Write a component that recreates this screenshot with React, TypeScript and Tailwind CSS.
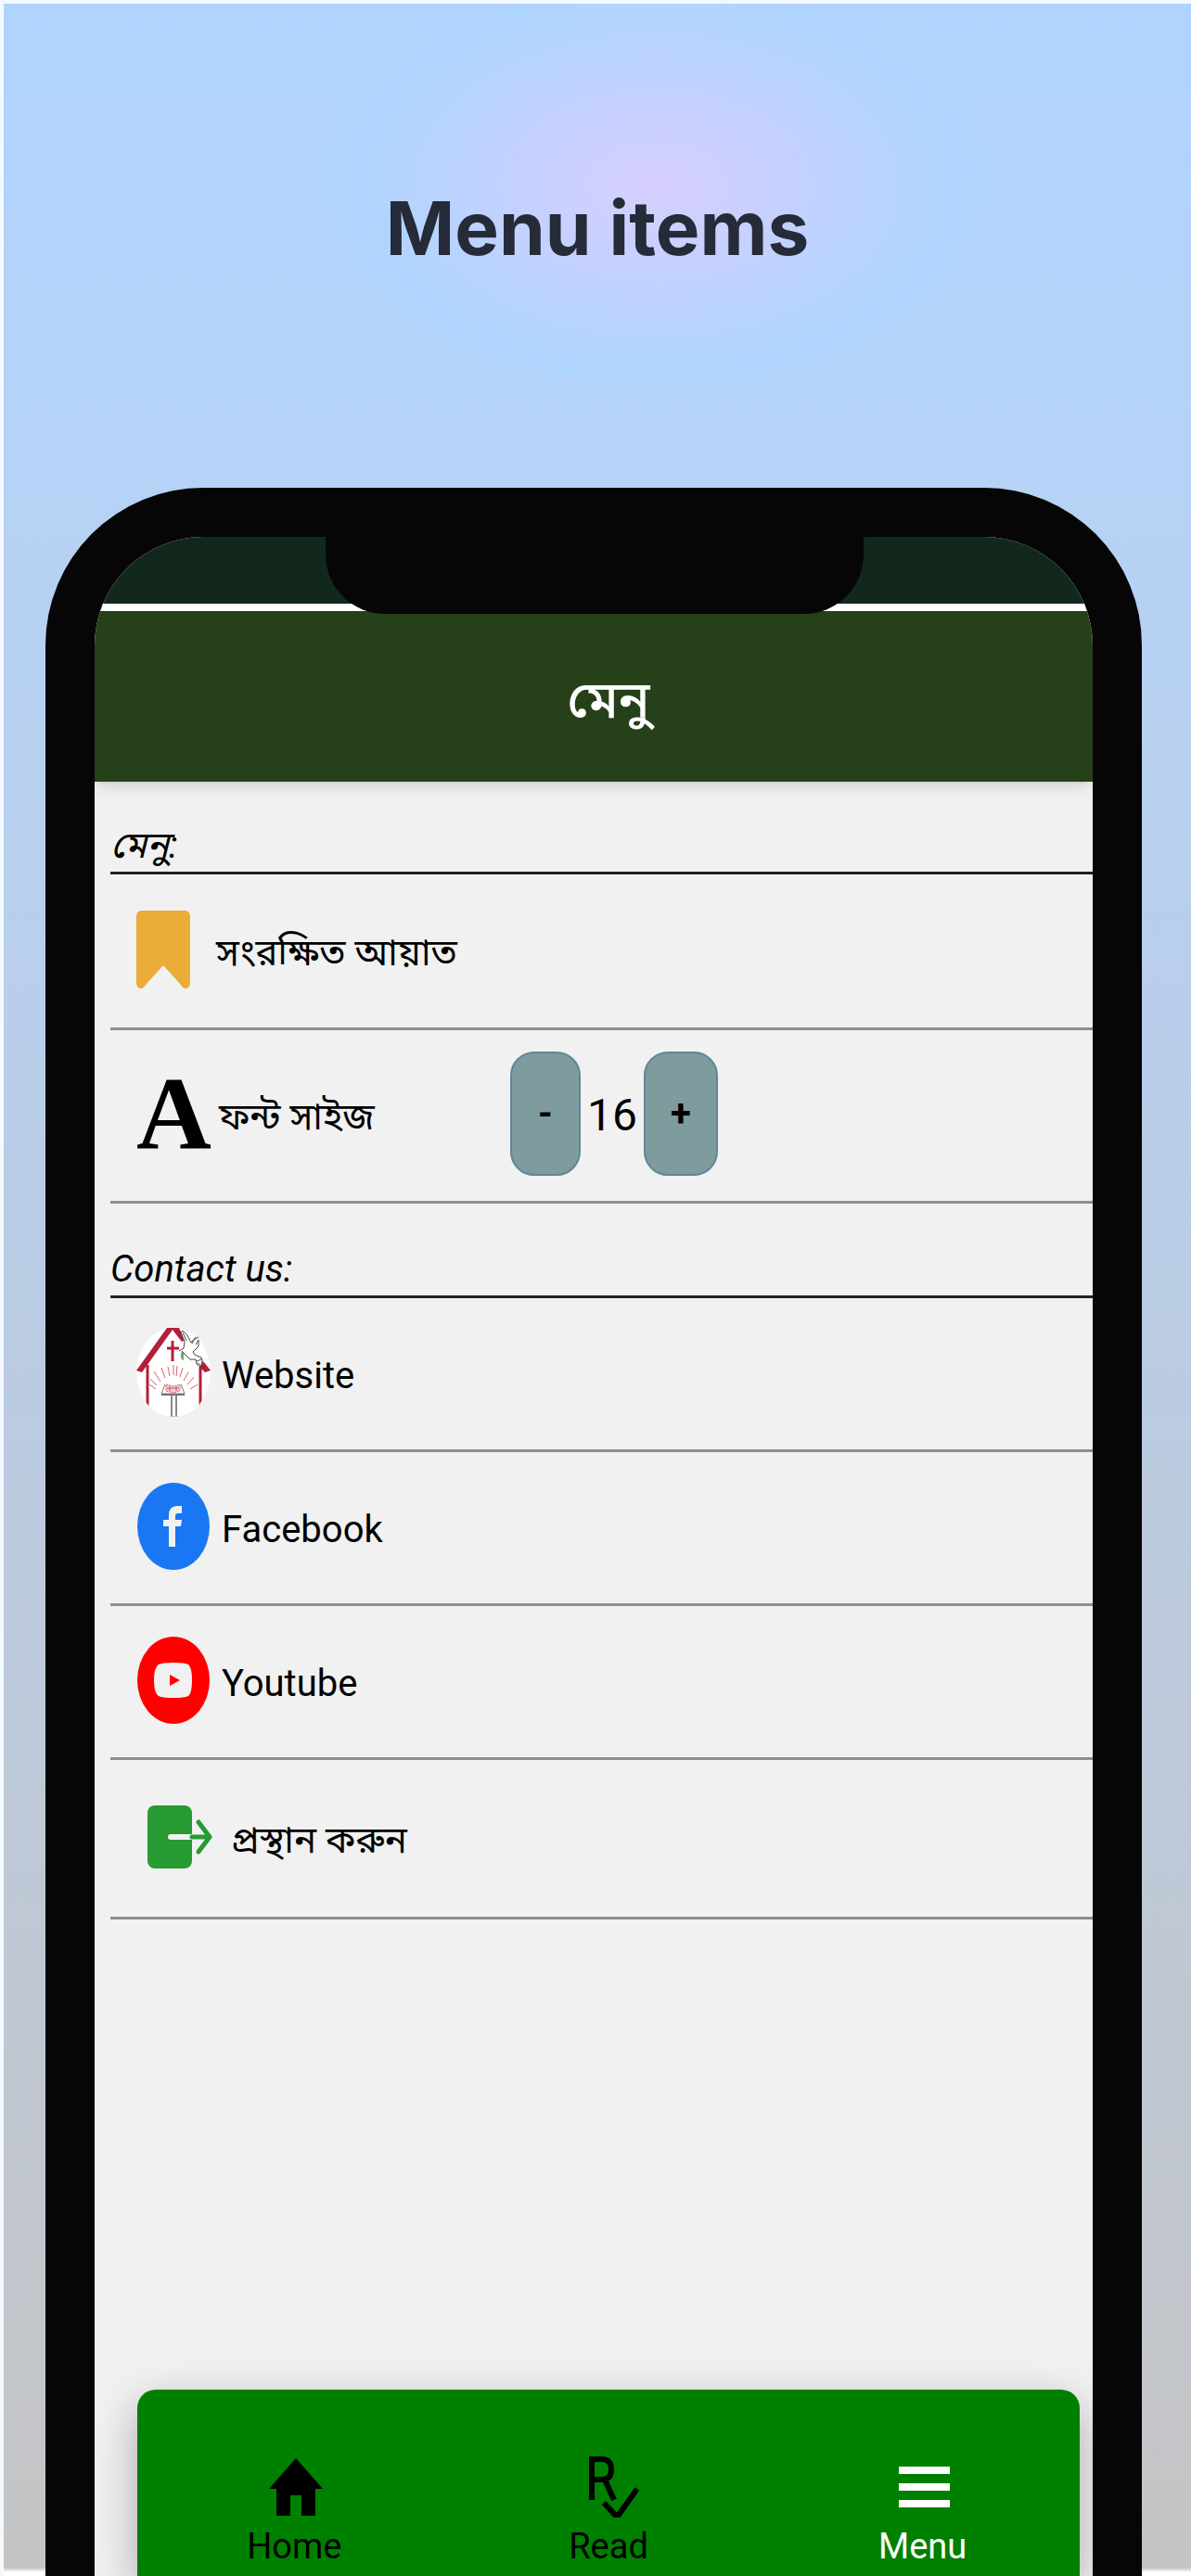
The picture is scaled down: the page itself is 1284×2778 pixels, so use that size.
import React, { useState } from "react";
import type { ReactNode } from "react";

const ROW = "flex items-center border-b-3 border-[#8e8e8e] pb-1 text-black";

function BookmarkIcon() {
  return (
    <svg viewBox="0 0 58 84" className="h-21 w-[58px]" aria-hidden="true">
      <path
        d="M6 0H52Q58 0 58 7V77Q58 84 53 84Q50 84 48 80L29 59L10 80Q8 84 5 84Q0 84 0 77V7Q0 0 6 0Z"
        fill="#ebac38"
      />
    </svg>
  );
}

function ChurchIcon() {
  return (
    <svg viewBox="0 0 80 96" className="h-24 w-20" aria-hidden="true">
      <defs>
        <clipPath id="church-oval">
          <ellipse cx="40" cy="48" rx="40" ry="48" />
        </clipPath>
      </defs>
      <ellipse cx="40" cy="48" rx="40" ry="48" fill="#fff" />
      <g clipPath="url(#church-oval)">
        <path d="M12 40V84M69 42V84" stroke="#b31f38" strokeWidth="3" />
      </g>
      <path d="M33 0H46L52 13L49 15L39 2L6 48L0 46Z" fill="#b31f38" />
      <path d="M70 38L73 37L80 46L74 48L69 43Z" fill="#b31f38" />
      <path d="M39 14V36M33 22H46" stroke="#b31f38" strokeWidth="3" />
      <g stroke="#d4606f" strokeWidth="1">
        <path d="M36 52L34 42M40 51V40M43 52L44 41M47 53L50 43M31 54L27 43M26 58L19 47M51 57L56 48M55 61L62 53M22 62L15 55M58 66L66 61M21 66L14 61" />
      </g>
      <path d="M32 61L40 63L47 61V68L40 70L32 68Z" fill="#f3cdd2" stroke="#d4606f" strokeWidth="1" strokeDasharray="2 1" />
      <path d="M33 65H46M36 63V68M43 63V68" stroke="#cf5565" strokeWidth="1" />
      <path d="M31 61L27 71H52L48 61" fill="none" stroke="#777" strokeWidth="1" />
      <path d="M27 72H52" stroke="#777" strokeWidth="2" />
      <path d="M38 73V95M43 73V95" stroke="#888" strokeWidth="2" />
      <path d="M36 96H45" stroke="#888" strokeWidth="1" />
      {/* dove with the olive branch */}
      <path d="M49 25Q54 24 51 29V35Q47 34 48 28Z" fill="#71a968" />
      <path
        d="M46 25L51 22L52 15L48 5L50 3L55 8L59 16L64 10M60 17L62 13L67 10M64 18L67 13V20L61 26L63 29L70 32L72 38L69 42L65 39L64 34L58 34L52 28L49 25"
        fill="#fff"
        stroke="#444"
        strokeWidth="1"
      />
      <path d="M66 38L70 41L71 36M50 5L54 14M65 36L70 34" fill="none" stroke="#444" strokeWidth="1" />
    </svg>
  );
}

function FacebookIcon() {
  return (
    <svg viewBox="0 0 78 94" className="h-[94px] w-[78px]" aria-hidden="true">
      <ellipse cx="39" cy="47" rx="39" ry="47" fill="#1977f3" />
      <path d="M34 69V47H28V40H34V35Q34 25 43 25H48V33H44Q41 33 41 36V40H48L47 47H41V69Z" fill="#f1f1f1" />
    </svg>
  );
}

function YoutubeIcon() {
  return (
    <svg viewBox="0 0 78 94" className="h-[94px] w-[78px]" aria-hidden="true">
      <ellipse cx="39" cy="47" rx="39" ry="47" fill="#ff0000" />
      <path d="M39 28Q51 28 55 30Q59 33 59 47Q59 61 55 64Q51 66 39 66Q27 66 23 64Q18 61 18 47Q18 33 23 30Q27 28 39 28Z" fill="#f1f1f1" />
      <path d="M35 41V53L46 47Z" fill="#ff0000" />
    </svg>
  );
}

function ExitIcon() {
  return (
    <svg viewBox="0 0 70 68" className="h-17 w-[70px]" aria-hidden="true">
      <rect width="48" height="68" rx="8" fill="#279b32" />
      <path d="M25 34H48" stroke="#f1f1f1" strokeWidth="6" strokeLinecap="round" />
      <path d="M48 34H67M55 18L67 34L55 50" fill="none" stroke="#279b32" strokeWidth="5" strokeLinecap="round" strokeLinejoin="round" />
    </svg>
  );
}

function HomeIcon() {
  return (
    <svg viewBox="0 0 58 62" className="h-[62px] w-[58px]" aria-hidden="true">
      <path d="M29 0L58 33H50V62H35V40H23V62H8V33H0Z" fill="currentColor" />
    </svg>
  );
}

function ReadIcon() {
  return (
    <svg viewBox="-8 0 62 66" className="h-[66px] w-[62px]" aria-hidden="true">
      <path d="M3 47V3H14Q24 3 24 14Q24 25 14 25H3M17 25L27 47" fill="none" stroke="currentColor" strokeWidth="6" />
      <path d="M16 50L28 63H32L52 35" fill="none" stroke="currentColor" strokeWidth="6" />
    </svg>
  );
}

function MenuIcon() {
  return (
    <svg viewBox="0 0 55 44" className="h-11 w-[55px]" aria-hidden="true">
      <path d="M0 4H55M0 22H55M0 40H55" stroke="currentColor" strokeWidth="8" />
    </svg>
  );
}

const CONTACT_LINKS: { id: string; label: string; icon: ReactNode }[] = [
  { id: "website", label: "Website", icon: <ChurchIcon /> },
  { id: "facebook", label: "Facebook", icon: <FacebookIcon /> },
  { id: "youtube", label: "Youtube", icon: <YoutubeIcon /> },
];

const TABS: { id: string; label: string; icon: ReactNode }[] = [
  { id: "home", label: "Home", icon: <HomeIcon /> },
  { id: "read", label: "Read", icon: <ReadIcon /> },
  { id: "menu", label: "Menu", icon: <MenuIcon /> },
];

export default function App() {
  const [fontSize, setFontSize] = useState(16);
  const [activeTab, setActiveTab] = useState("menu");

  return (
    <div className="flex min-h-screen flex-col overflow-hidden border-t-4 border-l-4 border-[#f4f9ff] bg-[linear-gradient(0deg,#fff_4px,transparent_9px),radial-gradient(360px_225px_at_55%_196px,#d6cfff_0%,#c3d1ff_45%,#aed5ff_92%,transparent_100%),linear-gradient(180deg,#b0d4ff_0%,#b6d2f6_18%,#bacce4_50%,#c1c6ce_85%,#c4c4c4_100%)] font-['Roboto','Noto_Sans_Bengali','Noto_Sans',sans-serif]">
      {/* Title */}
      <h1 className="pt-48 text-center font-['Inter',sans-serif] text-[80px] leading-[100px] font-bold text-[#252b38]">
        Menu items
      </h1>

      {/* Phone */}
      <div className="relative mt-[230px] mr-[53px] ml-[45px] flex flex-1 flex-col overflow-hidden rounded-t-[170px] border-x-53 border-t-53 border-[#060606] bg-[#f1f1f1]">
        <div className="absolute top-0 left-[249px] h-[83px] w-[580px] rounded-b-[64px] bg-[#060606]" />
        <div className="h-20 border-b-8 border-white bg-[#13281d]" />

        <header className="flex h-46 items-center justify-center bg-[#264019] pt-2 pl-8 shadow-lg">
          <h2 className="text-[56px] font-medium text-white">মেনু</h2>
        </header>

        <main className="flex-1 pl-[17px] text-[40px] text-black">
          <section>
            <h3 className="flex h-25 items-end border-b-3 border-[#222] text-[40px] leading-14 italic">মেনু:</h3>
            <button type="button" className={`${ROW} h-42 w-full gap-7 pl-7`}>
              <BookmarkIcon />
              <span className="pt-2">সংরক্ষিত আয়াত</span>
            </button>
            <div className={`${ROW} h-[187px] pl-7`}>
              <span className="font-['Liberation_Serif',serif] text-[112px] leading-none font-bold" aria-hidden="true">A</span>
              <span className="ml-2 w-[314px] pt-2">ফন্ট সাইজ</span>
              <button
                type="button"
                aria-label="Decrease font size"
                onClick={() => setFontSize(fontSize - 1)}
                className="h-[134px] w-19 rounded-[26px] border-2 border-[#5e8798] bg-[#7e9b9d] font-bold"
              >
                -
              </button>
              <output className="w-17 pt-1 text-center text-5xl">{fontSize}</output>
              <button
                type="button"
                aria-label="Increase font size"
                onClick={() => setFontSize(fontSize + 1)}
                className="h-[134px] w-20 rounded-[26px] border-2 border-[#5e8798] bg-[#7e9b9d] font-bold"
              >
                +
              </button>
            </div>
          </section>

          <section>
            <h3 className="flex h-[102px] items-end border-b-3 border-[#222] text-[40px] leading-14 italic">Contact us:</h3>
            {CONTACT_LINKS.map((link) => (
              <a key={link.id} href={`#${link.id}`} className={`${ROW} h-[166px] gap-3 pl-7`}>
                <span className="flex w-20 justify-center">{link.icon}</span>
                <span className="pt-2">{link.label}</span>
              </a>
            ))}
            <button type="button" className={`${ROW} h-43 w-full gap-5 pl-10`}>
              <ExitIcon />
              <span className="pt-2">প্রস্থান করুন</span>
            </button>
          </section>
        </main>

        {/* Bottom tabs */}
        <nav className="mr-[14px] ml-[46px] grid h-[201px] grid-cols-3 rounded-t-[20px] bg-[#008000] pt-[69px] shadow-[0_16px_48px_rgba(0,0,0,0.3)]">
          {TABS.map((tab) => (
            <button
              key={tab.id}
              type="button"
              onClick={() => setActiveTab(tab.id)}
              className={`flex flex-col items-center text-[38px] leading-14 ${
                activeTab === tab.id ? "text-white" : "text-black"
              }`}
            >
              <span className="flex h-18 items-center pl-1">{tab.icon}</span>
              {tab.label}
            </button>
          ))}
        </nav>
      </div>
    </div>
  );
}
